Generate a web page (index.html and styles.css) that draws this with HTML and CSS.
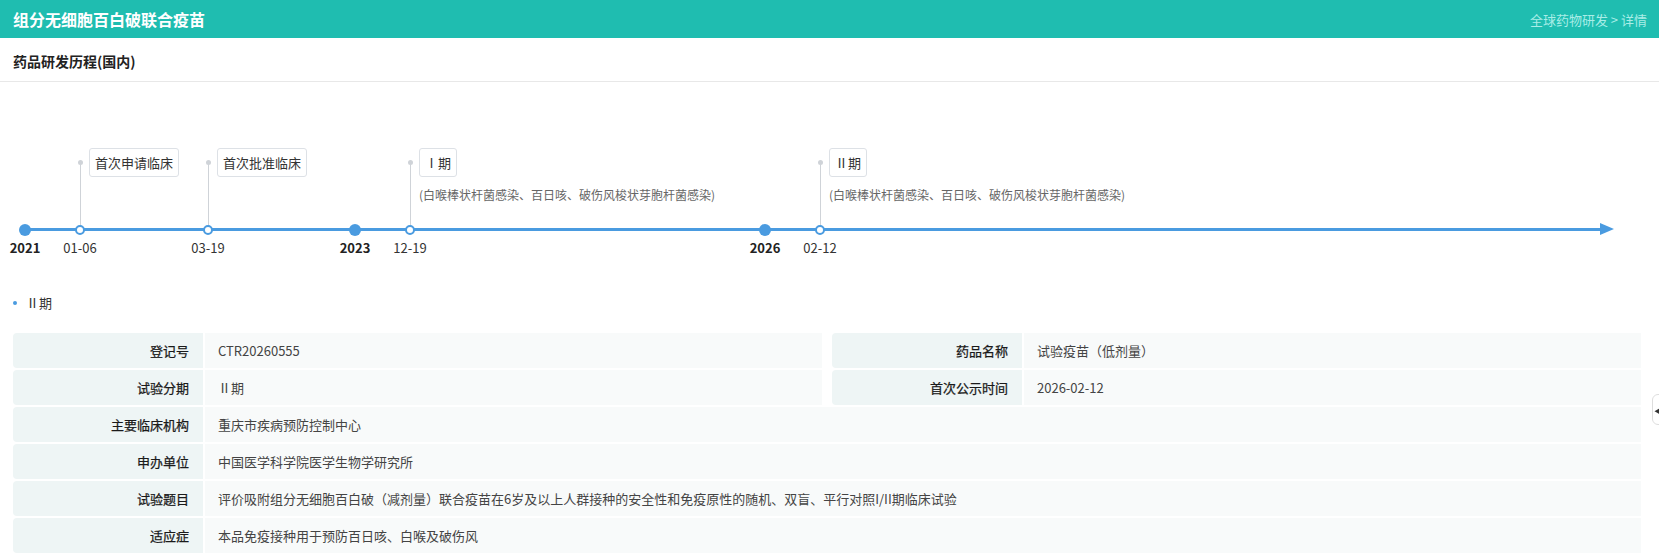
FILE: index.html
```html
<!DOCTYPE html>
<html lang="zh-CN">
<head>
  <meta charset="UTF-8" />
  <meta name="viewport" content="width=device-width, initial-scale=1.0"/>
  <title>组分无细胞百白破联合疫苗 - 详情</title>
  <link rel="stylesheet" href="styles.css">
</head>
<body>
  <header class="top-bar">
    <h1>组分无细胞百白破联合疫苗</h1>
    <div class="crumbs">全球药物研发 &gt; 详情</div>
  </header>

  <div class="section-title">药品研发历程(国内)</div>

  <div class="timeline">
    <div class="axis"></div>
    <div class="axis-arrow"></div>

    <div class="tl-node year" style="left:25px">
      <span class="dot"></span>
      <span class="tl-label">2021</span>
    </div>
    <div class="tl-node" style="left:80px">
      <span class="stem"></span>
      <span class="tag">首次申请临床</span>
      <span class="dot hollow"></span>
      <span class="tl-label">01-06</span>
    </div>
    <div class="tl-node" style="left:208px">
      <span class="stem"></span>
      <span class="tag">首次批准临床</span>
      <span class="dot hollow"></span>
      <span class="tl-label">03-19</span>
    </div>
    <div class="tl-node year" style="left:355px">
      <span class="dot"></span>
      <span class="tl-label">2023</span>
    </div>
    <div class="tl-node" style="left:410px">
      <span class="stem"></span>
      <span class="tag">Ⅰ期</span>
      <span class="desc">(白喉棒状杆菌感染、百日咳、破伤风梭状芽胞杆菌感染)</span>
      <span class="dot hollow"></span>
      <span class="tl-label">12-19</span>
    </div>
    <div class="tl-node year" style="left:765px">
      <span class="dot"></span>
      <span class="tl-label">2026</span>
    </div>
    <div class="tl-node" style="left:820px">
      <span class="stem"></span>
      <span class="tag">Ⅱ期</span>
      <span class="desc">(白喉棒状杆菌感染、百日咳、破伤风梭状芽胞杆菌感染)</span>
      <span class="dot hollow"></span>
      <span class="tl-label">02-12</span>
    </div>
  </div>

  <div class="phase-title">Ⅱ期</div>

  <div class="info-grid">
    <div class="item">
      <div class="item-label">登记号</div>
      <div class="item-value">CTR20260555</div>
    </div>
    <div class="item">
      <div class="item-label">药品名称</div>
      <div class="item-value">试验疫苗（低剂量）</div>
    </div>
    <div class="item">
      <div class="item-label">试验分期</div>
      <div class="item-value">Ⅱ期</div>
    </div>
    <div class="item">
      <div class="item-label">首次公示时间</div>
      <div class="item-value">2026-02-12</div>
    </div>
    <div class="item full">
      <div class="item-label">主要临床机构</div>
      <div class="item-value">重庆市疾病预防控制中心</div>
    </div>
    <div class="item full">
      <div class="item-label">申办单位</div>
      <div class="item-value">中国医学科学院医学生物学研究所</div>
    </div>
    <div class="item full">
      <div class="item-label">试验题目</div>
      <div class="item-value">评价吸附组分无细胞百白破（减剂量）联合疫苗在6岁及以上人群接种的安全性和免疫原性的随机、双盲、平行对照I/II期临床试验</div>
    </div>
    <div class="item full">
      <div class="item-label">适应症</div>
      <div class="item-value">本品免疫接种用于预防百日咳、白喉及破伤风</div>
    </div>
  </div>

  <div class="side-tab">◀</div>
</body>
</html>
```

FILE: styles.css
```css
* {
  box-sizing: border-box;
}

body {
  margin: 0;
  font-family: "Noto Sans CJK SC", "Noto Sans", sans-serif;
  font-size: 13px;
  color: #333;
  background: #fff;
  overflow: hidden;
}

.top-bar {
  display: flex;
  justify-content: space-between;
  align-items: center;
  height: 38px;
  padding: 0 12px 0 13px;
  background-color: #1fbdb0;
}

.top-bar h1 {
  margin: 0;
  font-size: 16px;
  font-weight: bold;
  color: #fff;
  line-height: 1;
}

.crumbs {
  font-size: 13px;
  color: #a9ede7;
}

.section-title {
  height: 44px;
  line-height: 46px;
  padding-left: 13px;
  font-size: 14px;
  font-weight: bold;
  color: #222;
  border-bottom: 1px solid #e8e8e8;
}

.timeline {
  position: relative;
  height: 206px;
}

.axis {
  position: absolute;
  left: 25px;
  top: 146px;
  width: 1576px;
  height: 3px;
  background: #4a9be0;
}

.axis-arrow {
  position: absolute;
  left: 1600px;
  top: 141px;
  width: 0;
  height: 0;
  border-left: 14px solid #4a9be0;
  border-top: 6.5px solid transparent;
  border-bottom: 6.5px solid transparent;
}

.tl-node {
  position: absolute;
  top: 0;
  bottom: 0;
  width: 0;
}

.dot {
  position: absolute;
  left: -6px;
  top: 141.5px;
  width: 12px;
  height: 12px;
  border-radius: 50%;
  background: #4a9be0;
}

.dot.hollow {
  left: -5px;
  top: 142.5px;
  width: 10px;
  height: 10px;
  background: #fff;
  border: 2px solid #4a9be0;
}

.tl-label {
  position: absolute;
  top: 157px;
  left: -40px;
  width: 80px;
  text-align: center;
  line-height: 18px;
  font-size: 13px;
  color: #333;
}

.year .tl-label {
  font-weight: bold;
  color: #222;
}

.stem {
  position: absolute;
  left: -0.5px;
  top: 80px;
  width: 1px;
  height: 66px;
  background: #cfd3d8;
}

.stem::before {
  content: "";
  position: absolute;
  left: -2px;
  top: -2px;
  width: 5px;
  height: 5px;
  border-radius: 50%;
  background: #cfd3d8;
}

.tag {
  position: absolute;
  left: 9px;
  top: 66px;
  height: 29px;
  line-height: 27px;
  padding: 0 5px;
  white-space: nowrap;
  font-size: 13px;
  color: #333;
  background: #fff;
  border: 1px solid #dde1e6;
  border-radius: 3px;
}

.desc {
  position: absolute;
  left: 9px;
  top: 104px;
  line-height: 18px;
  white-space: nowrap;
  font-size: 12px;
  color: #666;
}

.phase-title {
  position: relative;
  height: 39px;
  line-height: 18px;
  padding-left: 26px;
  font-size: 13px;
  color: #333;
  margin-top: 6px;
}

.phase-title::before {
  content: "";
  position: absolute;
  left: 13px;
  top: 7px;
  width: 4px;
  height: 4px;
  border-radius: 50%;
  background: #4a9be0;
}

.info-grid {
  display: grid;
  grid-template-columns: 1fr 1fr;
  gap: 2px 10px;
  margin: 0 18px 0 13px;
}

.item {
  display: flex;
  gap: 2px;
  height: 35px;
}

.item.full {
  grid-column: span 2;
}

.item-label {
  flex: 0 0 190px;
  padding-right: 14px;
  text-align: right;
  line-height: 35px;
  font-weight: normal;
  color: #1a1a1a;
  -webkit-text-stroke: 0.25px #1a1a1a;
  background: #eef5f5;
  border-radius: 4px 0 0 4px;
}

.item-value {
  flex: 1;
  padding-left: 13px;
  line-height: 35px;
  color: #444;
  background: #f8fafa;
  white-space: nowrap;
}

.side-tab {
  position: fixed;
  right: -14px;
  top: 394px;
  width: 21px;
  height: 31px;
  padding-left: 1px;
  line-height: 31px;
  font-size: 8px;
  color: #333;
  background: #fff;
  border: 1px solid #ddd;
  border-radius: 6px 0 0 6px;
}
```
